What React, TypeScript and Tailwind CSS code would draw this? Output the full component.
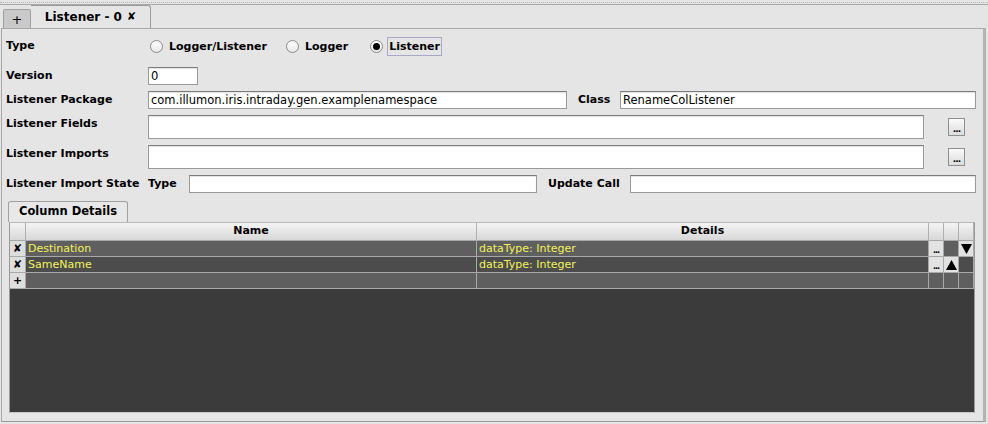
import React from "react";

const font = { fontFamily: '"DejaVu Sans", "Liberation Sans", sans-serif' };

function TextBox({ value = "", className = "" }: { value?: string; className?: string }) {
  return (
    <div
      className={`bg-white border border-[#9a9a9a] border-t-[#7c7c7c] shadow-[inset_0_1px_1px_rgba(0,0,0,0.12)] text-[11.5px] leading-[16px] px-[2px] text-black overflow-hidden whitespace-nowrap ${className}`}
    >
      {value}
    </div>
  );
}

function DotsButton() {
  return (
    <div className="w-[17px] h-[18px] border border-[#8f8f8f] bg-gradient-to-b from-[#fafafa] to-[#dcdcdc] flex items-end justify-center pb-[3px]">
      <span className="text-[9px] leading-[6px] font-bold tracking-[-1px]">...</span>
    </div>
  );
}

function Radio({ label, checked, focused, className = "" }: { label: string; checked?: boolean; focused?: boolean; className?: string }) {
  return (
    <div className={`flex items-center ${className}`}>
      <div className="w-[13px] h-[13px] rounded-full border border-[#8a8a8a] bg-gradient-to-b from-white to-[#e8e8e8] flex items-center justify-center">
        {checked && <div className="w-[7px] h-[7px] rounded-full bg-black" />}
      </div>
      <span
        className={`ml-[4px] text-[11px] font-bold leading-[17px] px-[1px] ${focused ? "border border-[#a8a8c8]" : "border border-transparent"}`}
      >
        {label}
      </span>
    </div>
  );
}

function Label({ children, className = "" }: { children: React.ReactNode; className?: string }) {
  return <div className={`text-[11px] font-bold text-black whitespace-nowrap ${className}`}>{children}</div>;
}

const rows = [
  { name: "Destination", details: "dataType: Integer", bg: "bg-[#5f5f5f]", down: true, up: false, mark: "✘" },
  { name: "SameName", details: "dataType: Integer", bg: "bg-[#4c4c4c]", down: false, up: true, mark: "✘" },
  { name: "", details: "", bg: "bg-[#5f5f5f]", down: false, up: false, mark: "+", empty: true },
];

export default function App() {
  return (
    <div className="w-[988px] h-[424px] bg-[#e5e5e5] overflow-hidden relative text-black" style={font}>
      {/* top strip */}
      <div className="h-[3px] border-b border-dotted border-[#b5b5b5]" />
      <div className="h-[2px] border-b border-[#a8a8a8]" />

      {/* tabs */}
      <div className="h-[23px] flex items-end pl-[3px]">
        <div className="w-[28px] h-[19px] bg-[#c9c9c9] border border-[#a0a0a0] border-b-0 rounded-t-[2px] flex items-center justify-center text-[13px] leading-none">
          +
        </div>
        <div className="w-[120px] h-[23px] bg-[#e5e5e5] border-t border-r border-[#9c9c9c] rounded-tr-[3px] flex items-center justify-center text-[12px] font-bold">
          Listener - 0 <span className="ml-[5px] text-[11px]">✘</span>
        </div>
      </div>

      {/* main panel */}
      <div className="mx-[1px] w-[985px] h-[394px] border-t border-l border-[#a8a8a8] border-r-[3px] border-r-[#b4b4b4] border-b border-b-[#9a9a9a] pl-[4px] pr-[7px] flex flex-col">
        {/* Type */}
        <div className="mt-[6px] h-[22px] flex items-center">
          <Label className="w-[144px]">Type</Label>
          <Radio label="Logger/Listener" />
          <Radio label="Logger" className="ml-[17px]" />
          <Radio label="Listener" checked focused className="ml-[20px]" />
        </div>

        {/* Version */}
        <div className="mt-[10px] h-[18px] flex items-center">
          <Label className="w-[142px] pt-[1px]">Version</Label>
          <TextBox value="0" className="w-[50px] h-[18px]" />
        </div>

        {/* Package */}
        <div className="mt-[6px] h-[18px] flex items-center">
          <Label className="w-[142px] pt-[1px]">Listener Package</Label>
          <TextBox value="com.illumon.iris.intraday.gen.examplenamespace" className="w-[419px] h-[18px]" />
          <Label className="ml-[11px] w-[42px] pt-[1px]">Class</Label>
          <TextBox value="RenameColListener" className="flex-1 h-[18px]" />
        </div>

        {/* Fields */}
        <div className="mt-[6px] h-[24px] flex items-start">
          <Label className="w-[142px] leading-[16px] pt-[1px]">Listener Fields</Label>
          <TextBox className="w-[776px] h-[24px]" />
          <div className="ml-[24px] mt-[3px]">
            <DotsButton />
          </div>
        </div>

        {/* Imports */}
        <div className="mt-[6px] h-[24px] flex items-start">
          <Label className="w-[142px] leading-[16px] pt-[1px]">Listener Imports</Label>
          <TextBox className="w-[776px] h-[24px]" />
          <div className="ml-[24px] mt-[3px]">
            <DotsButton />
          </div>
        </div>

        {/* Import State */}
        <div className="mt-[6px] h-[18px] flex items-center">
          <Label className="w-[142px] pt-[1px]">Listener Import State</Label>
          <Label className="w-[41px] pt-[1px]">Type</Label>
          <TextBox className="w-[348px] h-[18px]" />
          <Label className="ml-[11px] w-[82px] pt-[1px]">Update Call</Label>
          <TextBox className="flex-1 h-[18px]" />
        </div>

        {/* Column details tab */}
        <div className="mt-[8px] pl-[2px] flex">
          <div className="w-[120px] h-[21px] border-t border-l border-r border-[#a0a0a0] rounded-t-[3px] bg-[#e8e8e8] flex items-center justify-center text-[11.5px] font-bold">
            Column Details
          </div>
        </div>

        {/* table */}
        <div className="ml-[3px] w-[966px] h-[191px] border border-[#9a9a9a] border-b-[#c8c8c8] border-t-[#b8b8b8] bg-[#3b3b3b] flex flex-col">
          <div className="h-[18px] flex bg-gradient-to-b from-[#f4f4f4] to-[#d8d8d8] border-b border-[#a8a8a8] text-[11px] font-bold">
            <div className="w-[16px] border-r border-[#b0b0b0]" />
            <div className="w-[451px] border-r border-[#b0b0b0] flex items-center justify-center">Name</div>
            <div className="w-[452px] border-r border-[#b0b0b0] flex items-center justify-center">Details</div>
            <div className="w-[15px] border-r border-[#b0b0b0]" />
            <div className="w-[15px] border-r border-[#b0b0b0]" />
            <div className="w-[15px] border-r border-[#b0b0b0]" />
          </div>
          {rows.map((r, i) => (
            <div key={i} className={`h-[16px] flex border-b border-[#a9a9a9] ${r.bg} text-[11px] leading-[15px] text-[#f2f25a]`}>
              <div className="w-[16px] border-r border-[#a9a9a9] bg-[#dedede] text-black flex items-center justify-center text-[11px] font-bold">
                {r.mark}
              </div>
              <div className="w-[451px] border-r border-[#a9a9a9] pl-[2px] whitespace-nowrap">{r.name}</div>
              <div className="w-[452px] border-r border-[#a9a9a9] pl-[2px] whitespace-nowrap">{r.details}</div>
              <div className={`w-[15px] border-r border-[#a9a9a9] flex items-end justify-center pb-[3px] ${r.empty ? "" : "bg-[#e2e2e2]"}`}>
                {!r.empty && <span className="text-black text-[8px] leading-[5px] font-bold tracking-[-1px]">...</span>}
              </div>
              <div className={`w-[15px] border-r border-[#a9a9a9] flex items-center justify-center ${r.up ? "bg-[#e2e2e2]" : ""}`}>
                {r.up && (
                  <svg width="11" height="10" viewBox="0 0 11 10">
                    <polygon points="5.5,0 11,10 0,10" fill="#000" />
                  </svg>
                )}
              </div>
              <div className={`w-[15px] border-r border-[#a9a9a9] flex items-center justify-center ${r.down ? "bg-[#e2e2e2]" : ""}`}>
                {r.down && (
                  <svg width="11" height="10" viewBox="0 0 11 10">
                    <polygon points="0,0 11,0 5.5,10" fill="#000" />
                  </svg>
                )}
              </div>
            </div>
          ))}
        </div>
      </div>
    </div>
  );
}
